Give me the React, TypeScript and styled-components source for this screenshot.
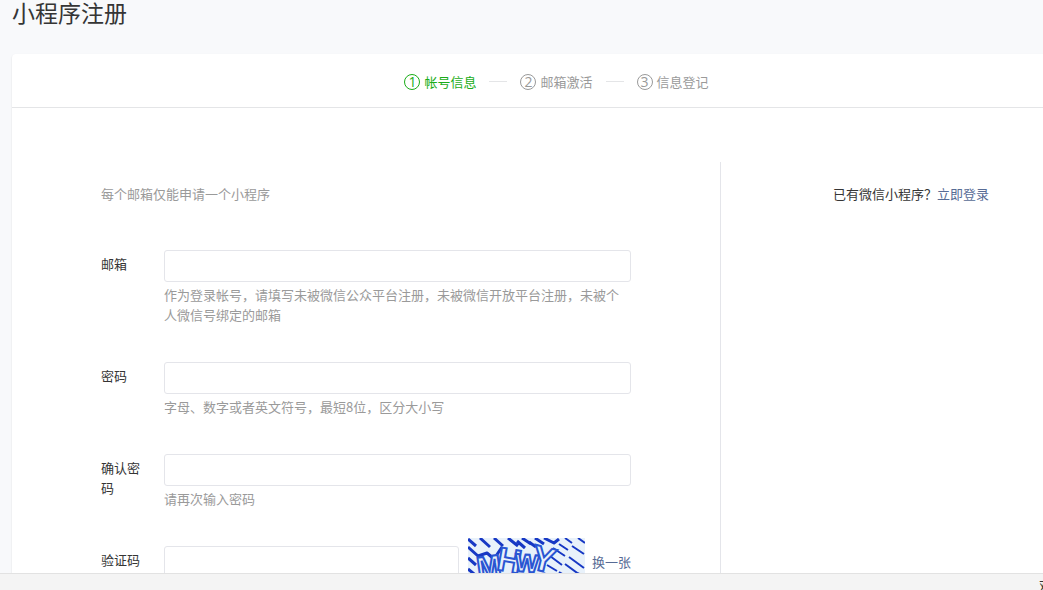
import React from "react";
import styled, { createGlobalStyle } from "styled-components";

const GlobalStyle = createGlobalStyle`
  * { box-sizing: border-box; }
  body {
    margin: 0;
    background: #f8f9fb;
    color: #353535;
    font-family: "Noto Sans CJK SC", sans-serif;
    font-size: 13px;
    line-height: 20px;
  }
`;

const Page = styled.div`
  display: flex;
  flex-direction: column;
  height: 100vh;
`;

const Content = styled.main`
  flex: 1;
  min-height: 0;
  padding-left: 12px;
  overflow: hidden auto;
  scrollbar-width: none;
`;

const Title = styled.h1`
  margin: 0 0 30px;
  font-size: 23px;
  font-weight: 400;
  line-height: 24px;
`;

const Card = styled.section`
  margin-right: -58px;
  background: #fff;
  border-radius: 4px;
  box-shadow: 0 1px 2px rgba(0, 0, 0, 0.12);
`;

const Steps = styled.ol`
  display: flex;
  align-items: center;
  justify-content: center;
  gap: 13px;
  height: 54px;
  margin: 0;
  padding: 2px 0 0;
  border-bottom: 1px solid #e4e5e7;
  list-style: none;
`;

const Step = styled.li<{ $active?: boolean }>`
  display: flex;
  align-items: center;
  gap: 4px;
  color: ${(p) => (p.$active ? "#1aad19" : "#9a9a9a")};

  &:not(:first-child)::before {
    content: "";
    width: 18px;
    height: 1px;
    margin-right: 9px;
    background: #e4e5e7;
  }
`;

const StepNumber = styled.span`
  display: flex;
  align-items: center;
  justify-content: center;
  width: 16px;
  height: 16px;
  border: 1px solid currentColor;
  border-radius: 50%;
  font-family: "Open Sans", sans-serif;
  font-size: 14px;
  line-height: 14px;
`;

const Columns = styled.div`
  display: grid;
  grid-template-columns: minmax(0, 709fr) minmax(0, 380fr);
  padding: 54px 0;
`;

const Form = styled.form`
  display: flex;
  flex-direction: column;
  gap: 37px;
  padding: 22px 89px 40px;
  border-right: 1px solid #e4e5ea;
`;

const Intro = styled.p`
  margin: 0 0 9px;
  color: #9a9a9a;
`;

const Field = styled.div`
  display: flex;
  gap: 15px;
`;

const Label = styled.label`
  flex: none;
  width: 48px;
  padding-top: 4px;
`;

const Control = styled.div`
  flex: 1;
  min-width: 0;
`;

const Input = styled.input`
  display: block;
  width: 100%;
  min-width: 0;
  height: 32px;
  padding: 0 10px;
  border: 1px solid #e4e5ea;
  border-radius: 3px;
  background: #fff;
  color: inherit;
  font: inherit;
`;

const Hint = styled.p`
  margin: 3px 0 0;
  color: #9a9a9a;
`;

const CaptchaRow = styled.div`
  display: flex;
  align-items: center;
`;

const CaptchaImage = styled.svg`
  flex: none;
  width: 117px;
  height: 48px;
  margin: -8px 7px -8px 9px;
`;

const Link = styled.a`
  flex: none;
  color: #576b95;
  text-decoration: none;
`;

const Side = styled.aside`
  padding-top: 22px;
  text-align: center;
`;

const StatusBar = styled.footer`
  display: flex;
  justify-content: flex-end;
  flex: none;
  height: 17px;
  padding-top: 2px;
  overflow: hidden;
  border-top: 1px solid #e2e2e2;
  background: #f4f4f4;
  font-size: 12px;
`;

const StatusText = styled.span`
  margin-right: -8px;
`;

const fields = [
  {
    id: "email",
    label: "邮箱",
    type: "email",
    hint: "作为登录帐号，请填写未被微信公众平台注册，未被微信开放平台注册，未被个人微信号绑定的邮箱",
  },
  { id: "password", label: "密码", type: "password", hint: "字母、数字或者英文符号，最短8位，区分大小写" },
  { id: "confirm", label: "确认密码", type: "password", hint: "请再次输入密码" },
];

function Captcha() {
  return (
    <CaptchaImage viewBox="0 0 117 48" role="img" aria-label="验证码图片">
      <rect width="117" height="48" fill="#e8f1fa" />
      <g fill="none" stroke="#1738c4" strokeWidth="3" strokeLinejoin="round">
        <path d="M0 1l8 7M12 0l10 9M26 0l9 8M40 0l10 8M54 0l9 6M67 0l9 6M0 9l10 9 9-3 7 6 8-12M0 20l8 7M0 31l11 9M49 3l8 7M61 4l7 5M76 0l10 5 5-4" />
        <path
          d="M97 0l7 5M110 0l7 5M91 6l9 6M104 8l12 8M85 10l12 8M101 19l15 11M82 18l12 9M97 26l15 11M79 27l10 6M91 34l13 8M110 35l7 6M76 35l10 7M0 41l9 7M17 40l9 8M65 41l9 7M106 43l7 5"
          strokeWidth="2"
        />
      </g>
      <g
        fill="#e8f1fa"
        stroke="#2a55d2"
        strokeWidth="2"
        fontFamily="Liberation Sans, sans-serif"
        fontWeight="700"
      >
        <text x="9" y="38" fontSize="29" transform="rotate(-8 22 30)">M</text>
        <text x="29" y="34" fontSize="33" transform="rotate(10 42 26)">H</text>
        <text x="47" y="34" fontSize="25" transform="rotate(4 60 28)">W</text>
        <text x="63" y="33" fontSize="35" transform="rotate(14 74 24)">Y</text>
      </g>
    </CaptchaImage>
  );
}

export default function App() {
  return (
    <>
      <GlobalStyle />
      <Page>
        <Content>
          <Title>小程序注册</Title>
          <Card>
            <Steps>
              {["帐号信息", "邮箱激活", "信息登记"].map((name, i) => (
                <Step key={name} $active={i === 0}>
                  <StepNumber>{i + 1}</StepNumber>
                  {name}
                </Step>
              ))}
            </Steps>
            <Columns>
              <Form>
                <Intro>每个邮箱仅能申请一个小程序</Intro>
                {fields.map((f) => (
                  <Field key={f.id}>
                    <Label htmlFor={f.id}>{f.label}</Label>
                    <Control>
                      <Input id={f.id} type={f.type} />
                      <Hint>{f.hint}</Hint>
                    </Control>
                  </Field>
                ))}
                <Field>
                  <Label htmlFor="captcha">验证码</Label>
                  <Control>
                    <CaptchaRow>
                      <Input id="captcha" type="text" />
                      <Captcha />
                      <Link href="#captcha">换一张</Link>
                    </CaptchaRow>
                  </Control>
                </Field>
              </Form>
              <Side>
                已有微信小程序？<Link href="#login">立即登录</Link>
              </Side>
            </Columns>
          </Card>
        </Content>
        <StatusBar>
          <StatusText>双</StatusText>
        </StatusBar>
      </Page>
    </>
  );
}
